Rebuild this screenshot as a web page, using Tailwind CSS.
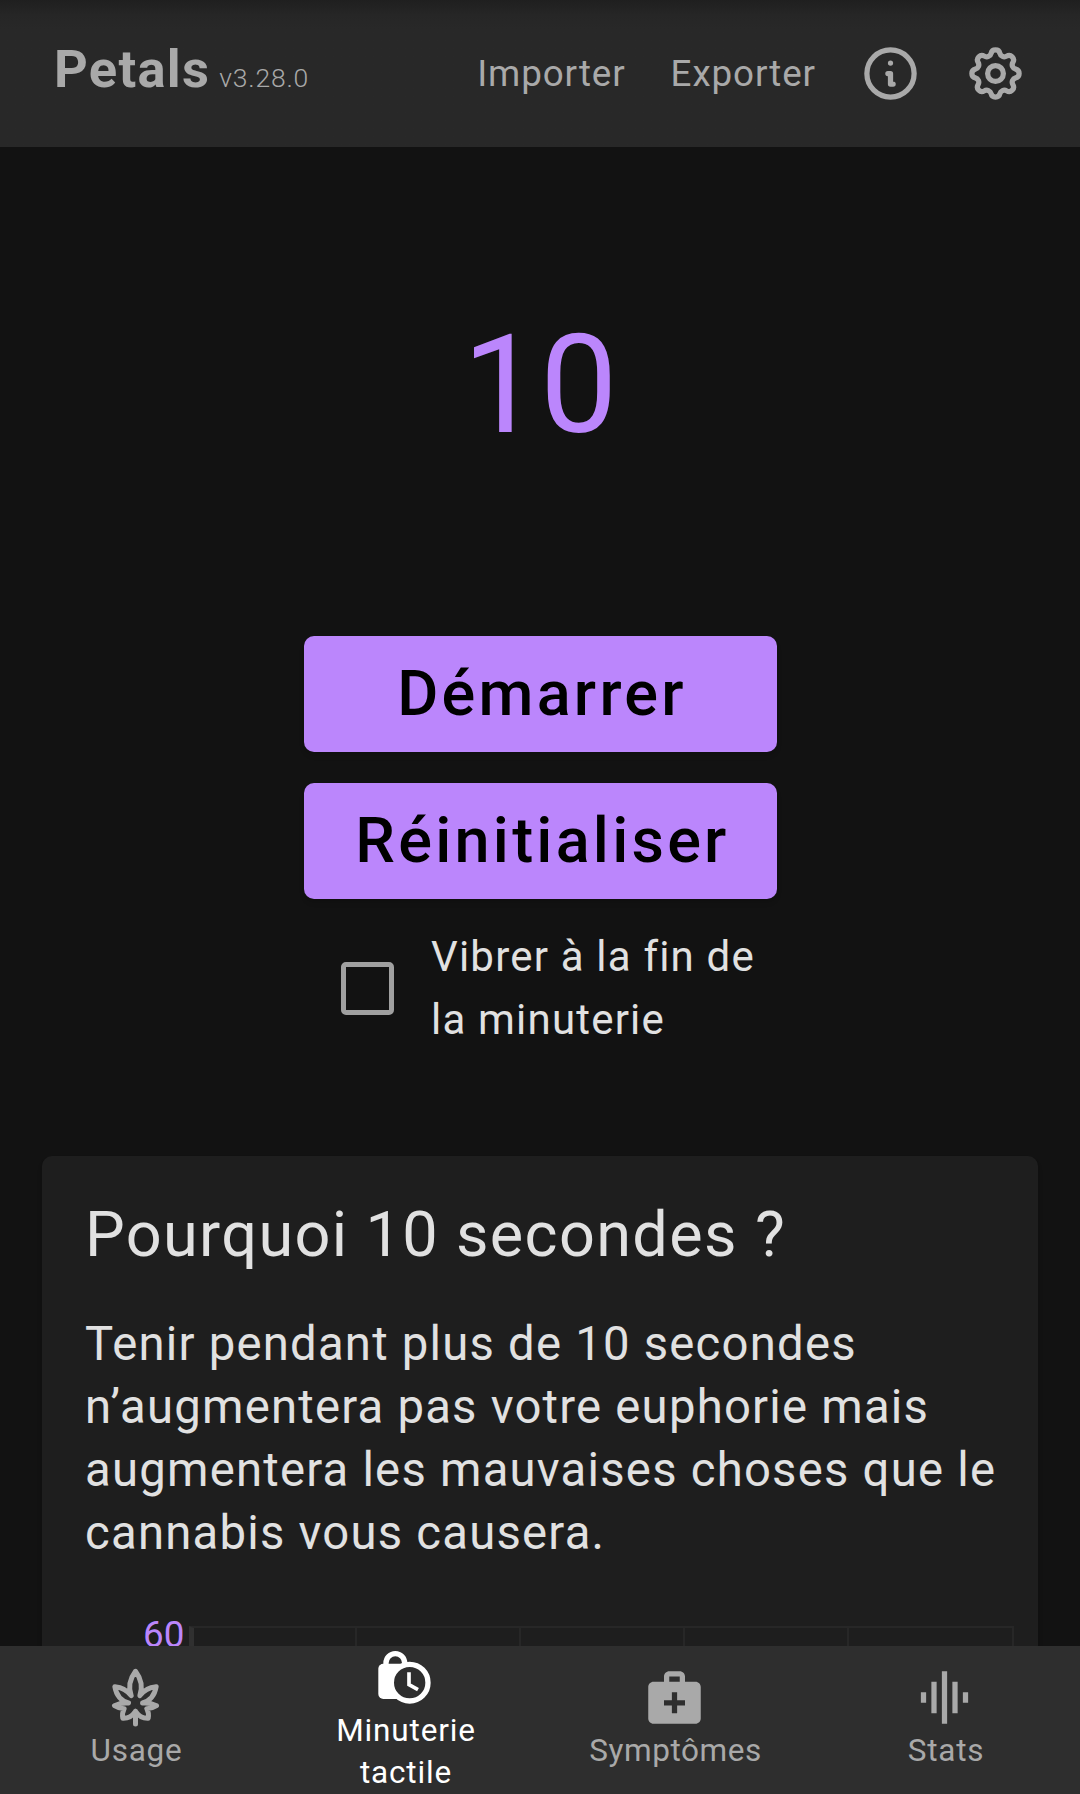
<!DOCTYPE html>
<html lang="fr">
<head>
<meta charset="utf-8">
<title>Petals</title>
<script src="https://cdn.jsdelivr.net/npm/@tailwindcss/browser@4"></script>
</head>
<body class="flex h-[1794px] w-[1080px] flex-col overflow-hidden bg-[#121212] font-[Roboto,sans-serif] text-[#e1e1e1]">
<header class="flex h-[147px] shrink-0 items-start bg-linear-to-b from-[#1f1f1f] via-[#262626] via-10% to-[#282828] to-20% pr-[53px] pl-[54px] text-[#a9a9a9]">
  <h1 class="mt-[38px] text-[52.5px] leading-[63px] font-bold tracking-[0.0243em]">Petals<span class="ml-[9px] text-[26.5px] font-light tracking-[0.03em]">v3.28.0</span></h1>
  <nav class="ml-auto flex items-start text-[36.75px] leading-[42px] tracking-[0.025em]">
    <a class="mt-[53px] mr-[45px]">Importer</a>
    <a class="mt-[53px] mr-[43px]">Exporter</a>
    <svg class="mt-[42px] mr-[42px] size-[63px]" viewBox="0 0 24 24" fill="none" stroke="currentColor" stroke-width="2" stroke-linecap="round" stroke-linejoin="round"><circle cx="12" cy="12" r="9"/><path d="M11 12h1v4h1"/><circle cx="12" cy="8" r="1" fill="currentColor" stroke="none"/></svg>
    <svg class="mt-[42px] size-[63px]" viewBox="0 0 24 24" fill="none" stroke="currentColor" stroke-width="2" stroke-linecap="round" stroke-linejoin="round"><path d="M10.325 4.317c.426-1.756 2.924-1.756 3.35 0a1.724 1.724 0 0 0 2.573 1.066c1.543-.94 3.31.826 2.37 2.37a1.724 1.724 0 0 0 1.065 2.572c1.756.426 1.756 2.924 0 3.35a1.724 1.724 0 0 0-1.066 2.573c.94 1.543-.826 3.31-2.37 2.37a1.724 1.724 0 0 0-2.572 1.065c-.426 1.756-2.924 1.756-3.35 0a1.724 1.724 0 0 0-2.573-1.066c-1.543.94-3.31-.826-2.37-2.37a1.724 1.724 0 0 0-1.065-2.572c-1.756-.426-1.756-2.924 0-3.35a1.724 1.724 0 0 0 1.066-2.573c-.94-1.543.826-3.31 2.37-2.37a1.724 1.724 0 0 0 2.572-1.065z"/><circle cx="12" cy="12" r="3"/></svg>
  </nav>
</header>
<main class="flex h-[1499px] shrink-0 flex-col items-center overflow-hidden">
  <div class="mt-[157px] text-[138px] leading-[162px] text-[#bb86fc]">10</div>
  <div class="mt-[170px] flex w-[473px] flex-col gap-[31px] text-[63px] leading-[116px] font-medium tracking-[0.0515em] text-black">
    <button class="h-[116px] rounded-[10px] bg-[#bb86fc] pl-[4px] shadow-md">Démarrer</button>
    <button class="h-[116px] rounded-[10px] bg-[#bb86fc] pl-[5px] shadow-md">Réinitialiser</button>
  </div>
  <label class="mt-[26px] flex w-[473px] items-center pl-[37px] text-[42px] leading-[63px] tracking-[0.0285em]">
    <span class="mr-[37.5px] size-[53px] shrink-0 rounded-[5px] border-5 border-[#a0a0a0]"></span>
    <span>Vibrer à la fin de<br>la minuterie</span>
  </label>
  <section class="mt-[105px] w-[996px] shrink-0 rounded-[10px] bg-[#1e1e1e] pt-[42px] pl-[43px] shadow-md">
    <h2 class="text-[63px] leading-[74px] tracking-[0.0216em]">Pourquoi 10 secondes ?</h2>
    <p class="mt-[41px] text-[47.25px] leading-[63px] tracking-[0.026em] whitespace-nowrap">Tenir pendant plus de 10 secondes<br>n’augmentera pas votre euphorie mais<br>augmentera les mauvaises choses que le<br>cannabis vous causera.</p>
    <div class="mt-[47px] flex h-[180px] pl-[58px]">
      <span class="mt-[2px] w-[46px] text-[36.75px] leading-[42px] text-[#bb86fc]">60</span>
      <div class="mt-[14px] flex w-[825px] border-t-2 border-l-5 border-t-[#272727] border-l-[#303030]">
        <div class="w-[163px] border-r-2 border-[#272727]"></div>
        <div class="w-[164px] border-r-2 border-[#272727]"></div>
        <div class="w-[164px] border-r-2 border-[#272727]"></div>
        <div class="w-[164px] border-r-2 border-[#272727]"></div>
        <div class="w-[165px] border-r-2 border-[#272727]"></div>
      </div>
    </div>
  </section>
</main>
<nav class="grid h-[148px] shrink-0 grid-cols-4 bg-[#2e2e2e] text-center text-[31.5px] leading-[42px] tracking-[0.0235em] text-[#a9a9a9]">
  <a class="flex flex-col items-center pt-[20px]">
    <svg class="size-[63px]" viewBox="11.5 18 189 189" fill="none" stroke="currentColor" stroke-width="15" stroke-linecap="round" stroke-linejoin="round"><path d="M106 34C88 58 84 82 93 107Q76 83 44 80C48 104 60 122 85 129Q62 127 43 137Q57 146 72 146Q65 159 68 175Q91 176 106 154Q121 176 144 175Q147 159 140 146Q155 146 169 137Q150 127 127 129C152 122 164 104 168 80Q136 83 119 107C128 82 124 58 106 34ZM106 154V192"/></svg>
    <span class="mt-px pl-[3px]">Usage</span>
  </a>
  <a class="flex flex-col items-center pr-[2px] text-white">
    <svg class="size-[63px]" viewBox="129 78 189 189" fill="none" stroke="currentColor"><path d="M168 139V129a28 28 0 0 1 56 0v10" stroke-width="16"/><path fill="currentColor" stroke="none" d="M160 131H225L239 187L225 237H160A15 15 0 0 1 145 222V146A15 15 0 0 1 160 131Z"/><circle cx="239" cy="188" r="55" stroke-width="16" fill="#2e2e2e"/><path d="M237 157v37l27 15" stroke-width="11"/></svg>
    <span class="mt-px pl-[4px] tracking-[0.027em]">Minuterie<br>tactile</span>
  </a>
  <a class="flex flex-col items-center pt-[20px] pr-[2px]">
    <svg class="size-[63px]" viewBox="0 0 24 24" fill="currentColor"><path d="M20 6h-4V4c0-1.100-.9-2-2-2h-4c-1.100 0-2 .9-2 2v2H4c-1.100 0-2 .9-2 2v12c0 1.100.9 2 2 2h16c1.100 0 2-.9 2-2V8c0-1.100-.9-2-2-2zM10 4h4v2h-4V4zm6 11h-3v3h-2v-3H8v-2h3v-3h2v3h3v2z"/></svg>
    <span class="mt-px pl-[3px] tracking-[0.018em]">Symptômes</span>
  </a>
  <a class="flex flex-col items-center pt-[20px] pr-[2px]">
    <svg class="size-[63px]" viewBox="0 0 24 24" fill="currentColor"><path d="M7 18h2V6H7v12zm4 4h2V2h-2v20zm-8-8h2v-4H3v4zm12 4h2V6h-2v12zm4-8v4h2v-4h-2z"/></svg>
    <span class="mt-px pl-[4px]">Stats</span>
  </a>
</nav>
</body>
</html>
